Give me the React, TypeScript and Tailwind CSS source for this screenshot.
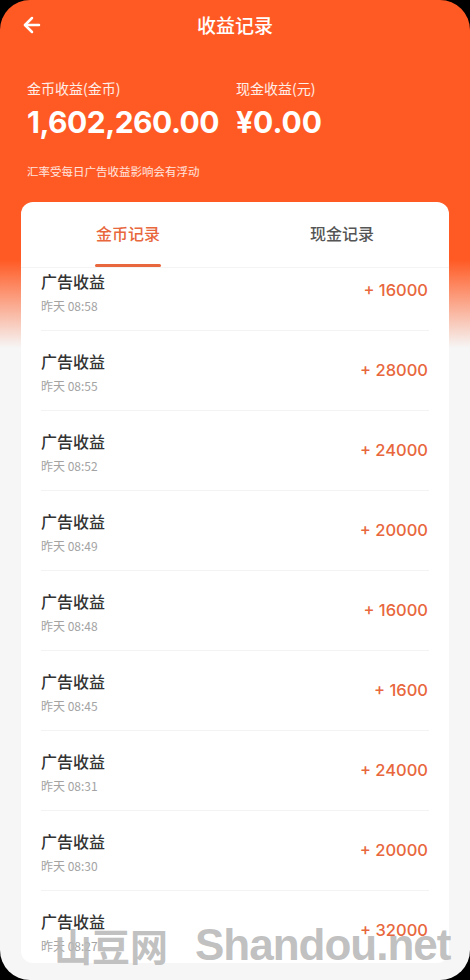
import { ArrowLeft } from 'lucide-react'

const rows = [
  { time: '08:58', amount: '16000' },
  { time: '08:55', amount: '28000' },
  { time: '08:52', amount: '24000' },
  { time: '08:49', amount: '20000' },
  { time: '08:48', amount: '16000' },
  { time: '08:45', amount: '1600' },
  { time: '08:31', amount: '24000' },
  { time: '08:30', amount: '20000' },
  { time: '08:27', amount: '32000' },
]

const App = () => {
  return (
    <div className="w-[470px] h-[980px] bg-black font-['Noto_Sans_CJK_SC',sans-serif]">
      <div className="relative w-full h-full rounded-[30px] overflow-hidden bg-[#f6f6f6] bg-[linear-gradient(180deg,#ff5a24_0px,#ff5a24_260px,#f6f6f6_348px)]">
        <div className="h-[50px] flex items-center px-5 relative">
          <ArrowLeft className="text-white w-6 h-6" strokeWidth={2.5} />
          <h1 className="absolute left-0 right-0 text-center text-white text-[19px] font-medium pointer-events-none">
            收益记录
          </h1>
        </div>
        <div className="px-[27px] pt-[27px] flex">
          <div className="w-[209px]">
            <p className="text-white/90 text-[14px] leading-[22px]">金币收益(金币)</p>
            <p className="text-white text-[30px] font-bold leading-[40px] mt-[3px] font-['Inter',sans-serif] tracking-[-0.5px]">
              1,602,260.00
            </p>
          </div>
          <div>
            <p className="text-white/90 text-[14px] leading-[22px]">现金收益(元)</p>
            <p className="text-white text-[30px] font-bold leading-[40px] mt-[3px] font-['Inter',sans-serif]">¥0.00</p>
          </div>
        </div>
        <p className="px-[27px] mt-[21px] text-white/85 text-[11.5px] leading-[16px]">
          汇率受每日广告收益影响会有浮动
        </p>
        <div className="mx-[21px] mt-[23px] bg-white rounded-[12px] h-[761px] overflow-hidden">
          <div className="flex h-[66px] border-b border-[#f4f4f4]">
            <div className="flex-1 flex flex-col items-center justify-between pt-[19px]">
              <span className="text-[#e8673c] text-[16px] font-medium leading-[24px]">金币记录</span>
              <span className="w-[66px] h-[3px] bg-[#e8673c] rounded-full" />
            </div>
            <div className="flex-1 flex flex-col items-center pt-[19px]">
              <span className="text-[#555] text-[16px] font-medium leading-[24px]">现金记录</span>
            </div>
          </div>
          <div className="-mt-[17px] px-5">
            {rows.map((r, i) => (
              <div
                key={i}
                className="h-[80px] flex items-center justify-between border-b border-[#f3f3f3]"
              >
                <div className="flex flex-col pt-[2px]">
                  <span className="text-[#333] text-[16px] font-medium leading-[24px]">广告收益</span>
                  <span className="text-[#a3a3a3] text-[12px] leading-[18px] mt-[4px]">昨天 {r.time}</span>
                </div>
                <span className="text-[#e8673c] text-[16.5px] font-medium pr-[1px] font-['Inter',sans-serif] whitespace-pre">
                  {'+ ' + r.amount}
                </span>
              </div>
            ))}
          </div>
        </div>
        <div className="absolute left-[54px] top-[920px] flex items-center gap-[27px] whitespace-nowrap text-[#b9b9b9]/90 font-bold pointer-events-none">
          <span className="text-[38px] leading-[50px]">山豆网</span>
          <span className="text-[44px] leading-[50px] font-['Liberation_Sans',sans-serif] tracking-[-1px]">Shandou.net</span>
        </div>
      </div>
    </div>
  )
}

export default App
